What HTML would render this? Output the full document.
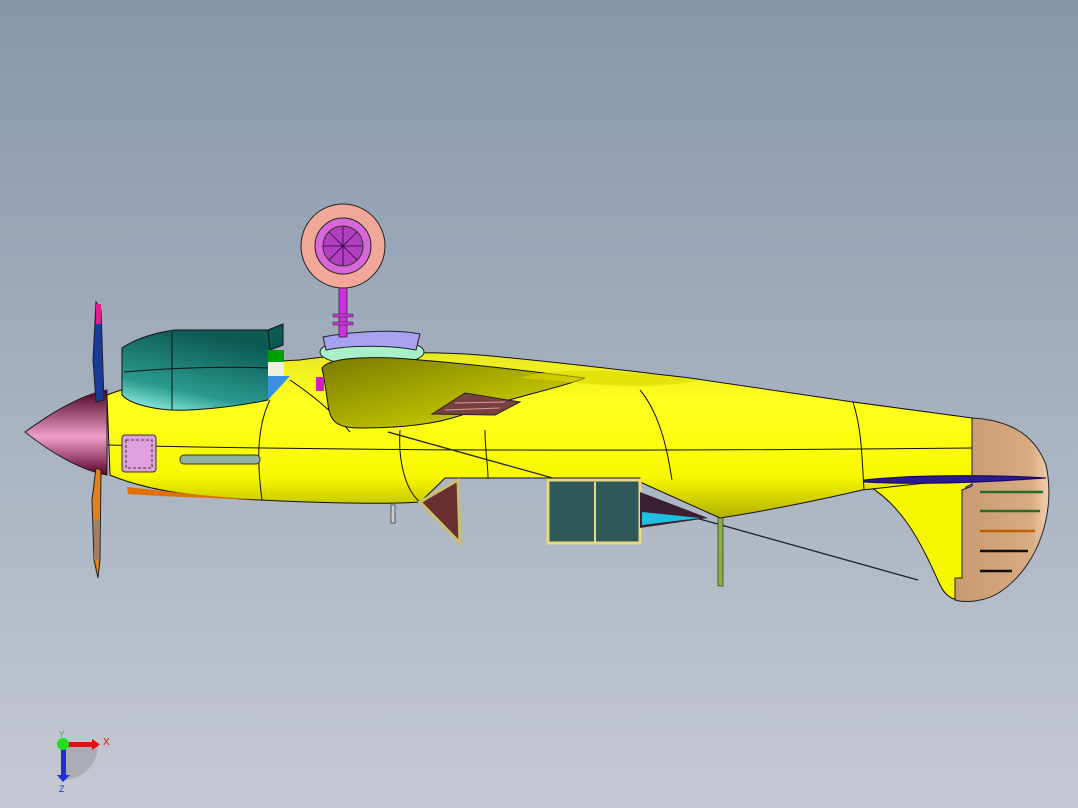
<!DOCTYPE html>
<html><head><style>
html,body{margin:0;padding:0;width:1078px;height:808px;overflow:hidden}
body{background:linear-gradient(#8797ab 0%,#a3aebd 45%,#c5c9d3 100%)}
svg{position:absolute;left:0;top:0}
</style></head><body>
<svg width="1078" height="808" viewBox="0 0 1078 808">
<defs>
<linearGradient id="yel" x1="0" y1="0" x2="0" y2="1">
<stop offset="0" stop-color="#e8e820"/><stop offset="0.3" stop-color="#ffff20"/><stop offset="0.75" stop-color="#f8f800"/><stop offset="1" stop-color="#b0b000"/></linearGradient>
<linearGradient id="olv" x1="0" y1="0" x2="1" y2="1">
<stop offset="0" stop-color="#7a7a00"/><stop offset="0.6" stop-color="#b8b800"/><stop offset="1" stop-color="#e0e020"/></linearGradient>
<linearGradient id="teal" x1="0" y1="1" x2="0.4" y2="0">
<stop offset="0" stop-color="#a0fff0"/><stop offset="0.35" stop-color="#2a9a90"/><stop offset="1" stop-color="#0d5a55"/></linearGradient>
<linearGradient id="spin" x1="0" y1="0" x2="0" y2="1">
<stop offset="0" stop-color="#4a0020"/><stop offset="0.55" stop-color="#f0a0c8"/><stop offset="1" stop-color="#600030"/></linearGradient>
<linearGradient id="tan" x1="0" y1="0" x2="1" y2="0">
<stop offset="0" stop-color="#c89a70"/><stop offset="0.8" stop-color="#d8aa80"/><stop offset="1" stop-color="#f0d0b0"/></linearGradient>
</defs>
<!-- fin / tail yellow -->
<path d="M858,480 C900,500 920,540 940,585 C945,595 952,600 960,600 L966,600 L966,487 L972,484 L972,418 L853,402 Z" fill="#f6f600" stroke="#111" stroke-width="1"/>
<!-- fuselage -->
<path d="M107,395 C150,378 250,362 300,360 C340,354 420,350 480,355 C560,362 620,370 690,378 L853,402 L972,418 L972,478 L862,490 C820,500 760,512 720,518 L640,482 L640,478 L445,478 C435,488 428,495 420,502 C380,505 300,502 260,500 C200,497 150,492 110,475 Z" fill="url(#yel)" stroke="#111" stroke-width="1"/>
<!-- panel lines -->
<g stroke="#111" stroke-width="1" fill="none">
<path d="M108,445 C300,450 600,452 972,448"/>
<path d="M270,400 C255,430 258,470 262,500"/>
<path d="M400,430 C398,460 405,490 420,502"/>
<path d="M485,430 C485,450 488,465 488,478"/>
<path d="M640,390 C665,420 670,470 672,480"/>
<path d="M853,402 C862,430 862,460 864,490"/>
<path d="M290,380 C320,400 340,420 350,432"/>
</g>
<!-- wire -->
<line x1="388" y1="432" x2="918" y2="580" stroke="#222" stroke-width="1.3"/>
<!-- ventral fin -->
<path d="M420,502 L458,480 L460,543 Z" fill="#6a3030" stroke="#c8c070" stroke-width="3"/>
<!-- window block -->
<rect x="548" y="480" width="92" height="63" fill="#2f5858" stroke="#e8d880" stroke-width="3"/>
<line x1="595" y1="482" x2="595" y2="543" stroke="#e8d880" stroke-width="2"/>
<path d="M640,492 L708,518 L640,528 Z" fill="#3a2030"/>
<path d="M642,512 L700,518 L642,525 Z" fill="#20c0e0"/>
<!-- gear legs -->
<rect x="718" y="518" width="5" height="68" fill="#8ab040" stroke="#333" stroke-width="0.7"/>
<rect x="391" y="505" width="4" height="18" fill="#ccc" stroke="#333" stroke-width="0.7"/>
<!-- canopy dome + olive -->
<ellipse cx="372" cy="352" rx="52" ry="14" fill="#a8f0c8" stroke="#222"/>
<path d="M323,337 C360,330 400,330 420,334 L416,350 C390,345 350,345 326,350 Z" fill="#a8a0f0" stroke="#222"/>
<path d="M322,368 C330,356 380,356 420,360 C470,364 520,370 585,378 C560,388 520,395 470,412 C450,420 420,428 360,428 C335,428 330,420 328,405 C326,390 324,378 322,368 Z" fill="url(#olv)" stroke="#111"/>
<path d="M520,378 C560,365 640,372 700,380 C640,392 600,384 520,378Z" fill="#d8d800" opacity="0.6"/>
<!-- grill -->
<path d="M432,414 L465,393 L520,402 L495,415 Z" fill="#7a4040" stroke="#222"/>
<g stroke="#c8a0a0" stroke-width="1"><line x1="445" y1="410" x2="500" y2="408"/><line x1="455" y1="403" x2="505" y2="402"/></g>
<!-- cowling -->
<path d="M122,348 C140,336 160,332 175,330 L270,330 L270,390 L268,400 C230,408 190,411 170,410 C145,408 128,402 122,395 Z" fill="url(#teal)" stroke="#111"/>
<g stroke="#111" fill="none"><line x1="172" y1="332" x2="172" y2="410"/><path d="M124,372 C170,368 230,366 268,368"/></g>
<path d="M268,330 L283,324 L283,345 L270,350Z" fill="#0d5a55" stroke="#111"/>
<rect x="268" y="350" width="16" height="12" fill="#00a000"/>
<rect x="268" y="362" width="16" height="14" fill="#f0f0e0"/>
<path d="M268,376 L290,376 L268,400Z" fill="#3a90e0"/>
<rect x="316" y="377" width="8" height="14" fill="#d020c0"/>
<!-- louvres -->
<rect x="122" y="435" width="34" height="37" rx="3" fill="#e0a0e0" stroke="#333"/>
<g fill="#eee800"><rect x="126" y="440" width="26" height="28" fill="none" stroke="#440" stroke-dasharray="3 2"/></g>
<rect x="180" y="455" width="80" height="9" rx="4" fill="#90b0a0" stroke="#333"/>
<!-- chin orange -->
<path d="M127,487 L200,495 L260,500 L160,496 L128,494Z" fill="#e07000"/>
<!-- spinner -->
<path d="M25,432 C50,414 80,395 107,390 L107,475 C80,470 50,452 25,432 Z" fill="url(#spin)" stroke="#222"/>
<!-- prop -->
<path d="M96,302 L101,310 L104,400 L96,402 L93,360 Z" fill="#1a3a9a" stroke="#222"/>
<rect x="96" y="304" width="5" height="20" fill="#e02090"/>
<path d="M96,468 L101,470 L100,560 L98,578 L94,560 L92,500 Z" fill="#e08020" stroke="#222"/>
<rect x="94" y="520" width="5" height="40" fill="#a08060"/>
<!-- rudder -->
<path d="M972,418 C1010,420 1035,435 1046,465 C1056,510 1040,565 1000,592 C985,602 965,603 955,600 L955,578 L962,578 L962,490 L972,486 Z" fill="url(#tan)" stroke="#222"/>
<g stroke-width="2.5"><line x1="980" y1="492" x2="1043" y2="492" stroke="#2a6a2a"/><line x1="980" y1="511" x2="1040" y2="511" stroke="#2a6a2a"/><line x1="980" y1="531" x2="1035" y2="531" stroke="#c06000"/><line x1="980" y1="551" x2="1028" y2="551" stroke="#111"/><line x1="980" y1="571" x2="1012" y2="571" stroke="#111"/></g>
<!-- stabilizer -->
<path d="M864,480 C920,474 1000,475 1046,478 L1000,481 C940,484 900,484 864,482Z" fill="#2a1a8a" stroke="#120060"/>
<!-- wheel -->
<rect x="339" y="285" width="8" height="52" fill="#d030e0" stroke="#222" stroke-width="0.7"/>
<rect x="333" y="314" width="20" height="3" fill="#d030e0" stroke="#222" stroke-width="0.5"/>
<rect x="333" y="322" width="20" height="3" fill="#d030e0" stroke="#222" stroke-width="0.5"/>
<circle cx="343" cy="246" r="42" fill="#f2a898" stroke="#222"/>
<circle cx="343" cy="246" r="28" fill="#d868d8" stroke="#222"/>
<circle cx="343" cy="246" r="20" fill="#b040c0" stroke="#333"/>
<g stroke="#300040" stroke-width="0.8"><line x1="323" y1="246" x2="363" y2="246"/><line x1="343" y1="226" x2="343" y2="266"/><line x1="329" y1="232" x2="357" y2="260"/><line x1="357" y1="232" x2="329" y2="260"/></g>
<!-- axes -->
<path d="M63,745 L63,780 A35,35 0 0 0 98,745 Z" fill="#888" opacity="0.4"/>
<rect x="61" y="745" width="5" height="30" fill="#2030d0"/>
<path d="M57,775 L70,775 L63,782Z" fill="#2030d0"/>
<rect x="63" y="742" width="30" height="5" fill="#e01010"/>
<path d="M92,739 L100,744.5 L92,750Z" fill="#e01010"/>
<circle cx="63" cy="744" r="6" fill="#20e020"/>
<text x="103" y="745" font-family="Liberation Sans,sans-serif" font-size="10" fill="#e01010">X</text>
<text x="59" y="737" font-family="Liberation Sans,sans-serif" font-size="8" fill="#20c020">Y</text>
<text x="59" y="792" font-family="Liberation Sans,sans-serif" font-size="9" fill="#2030d0">Z</text>
</svg>
</body></html>
